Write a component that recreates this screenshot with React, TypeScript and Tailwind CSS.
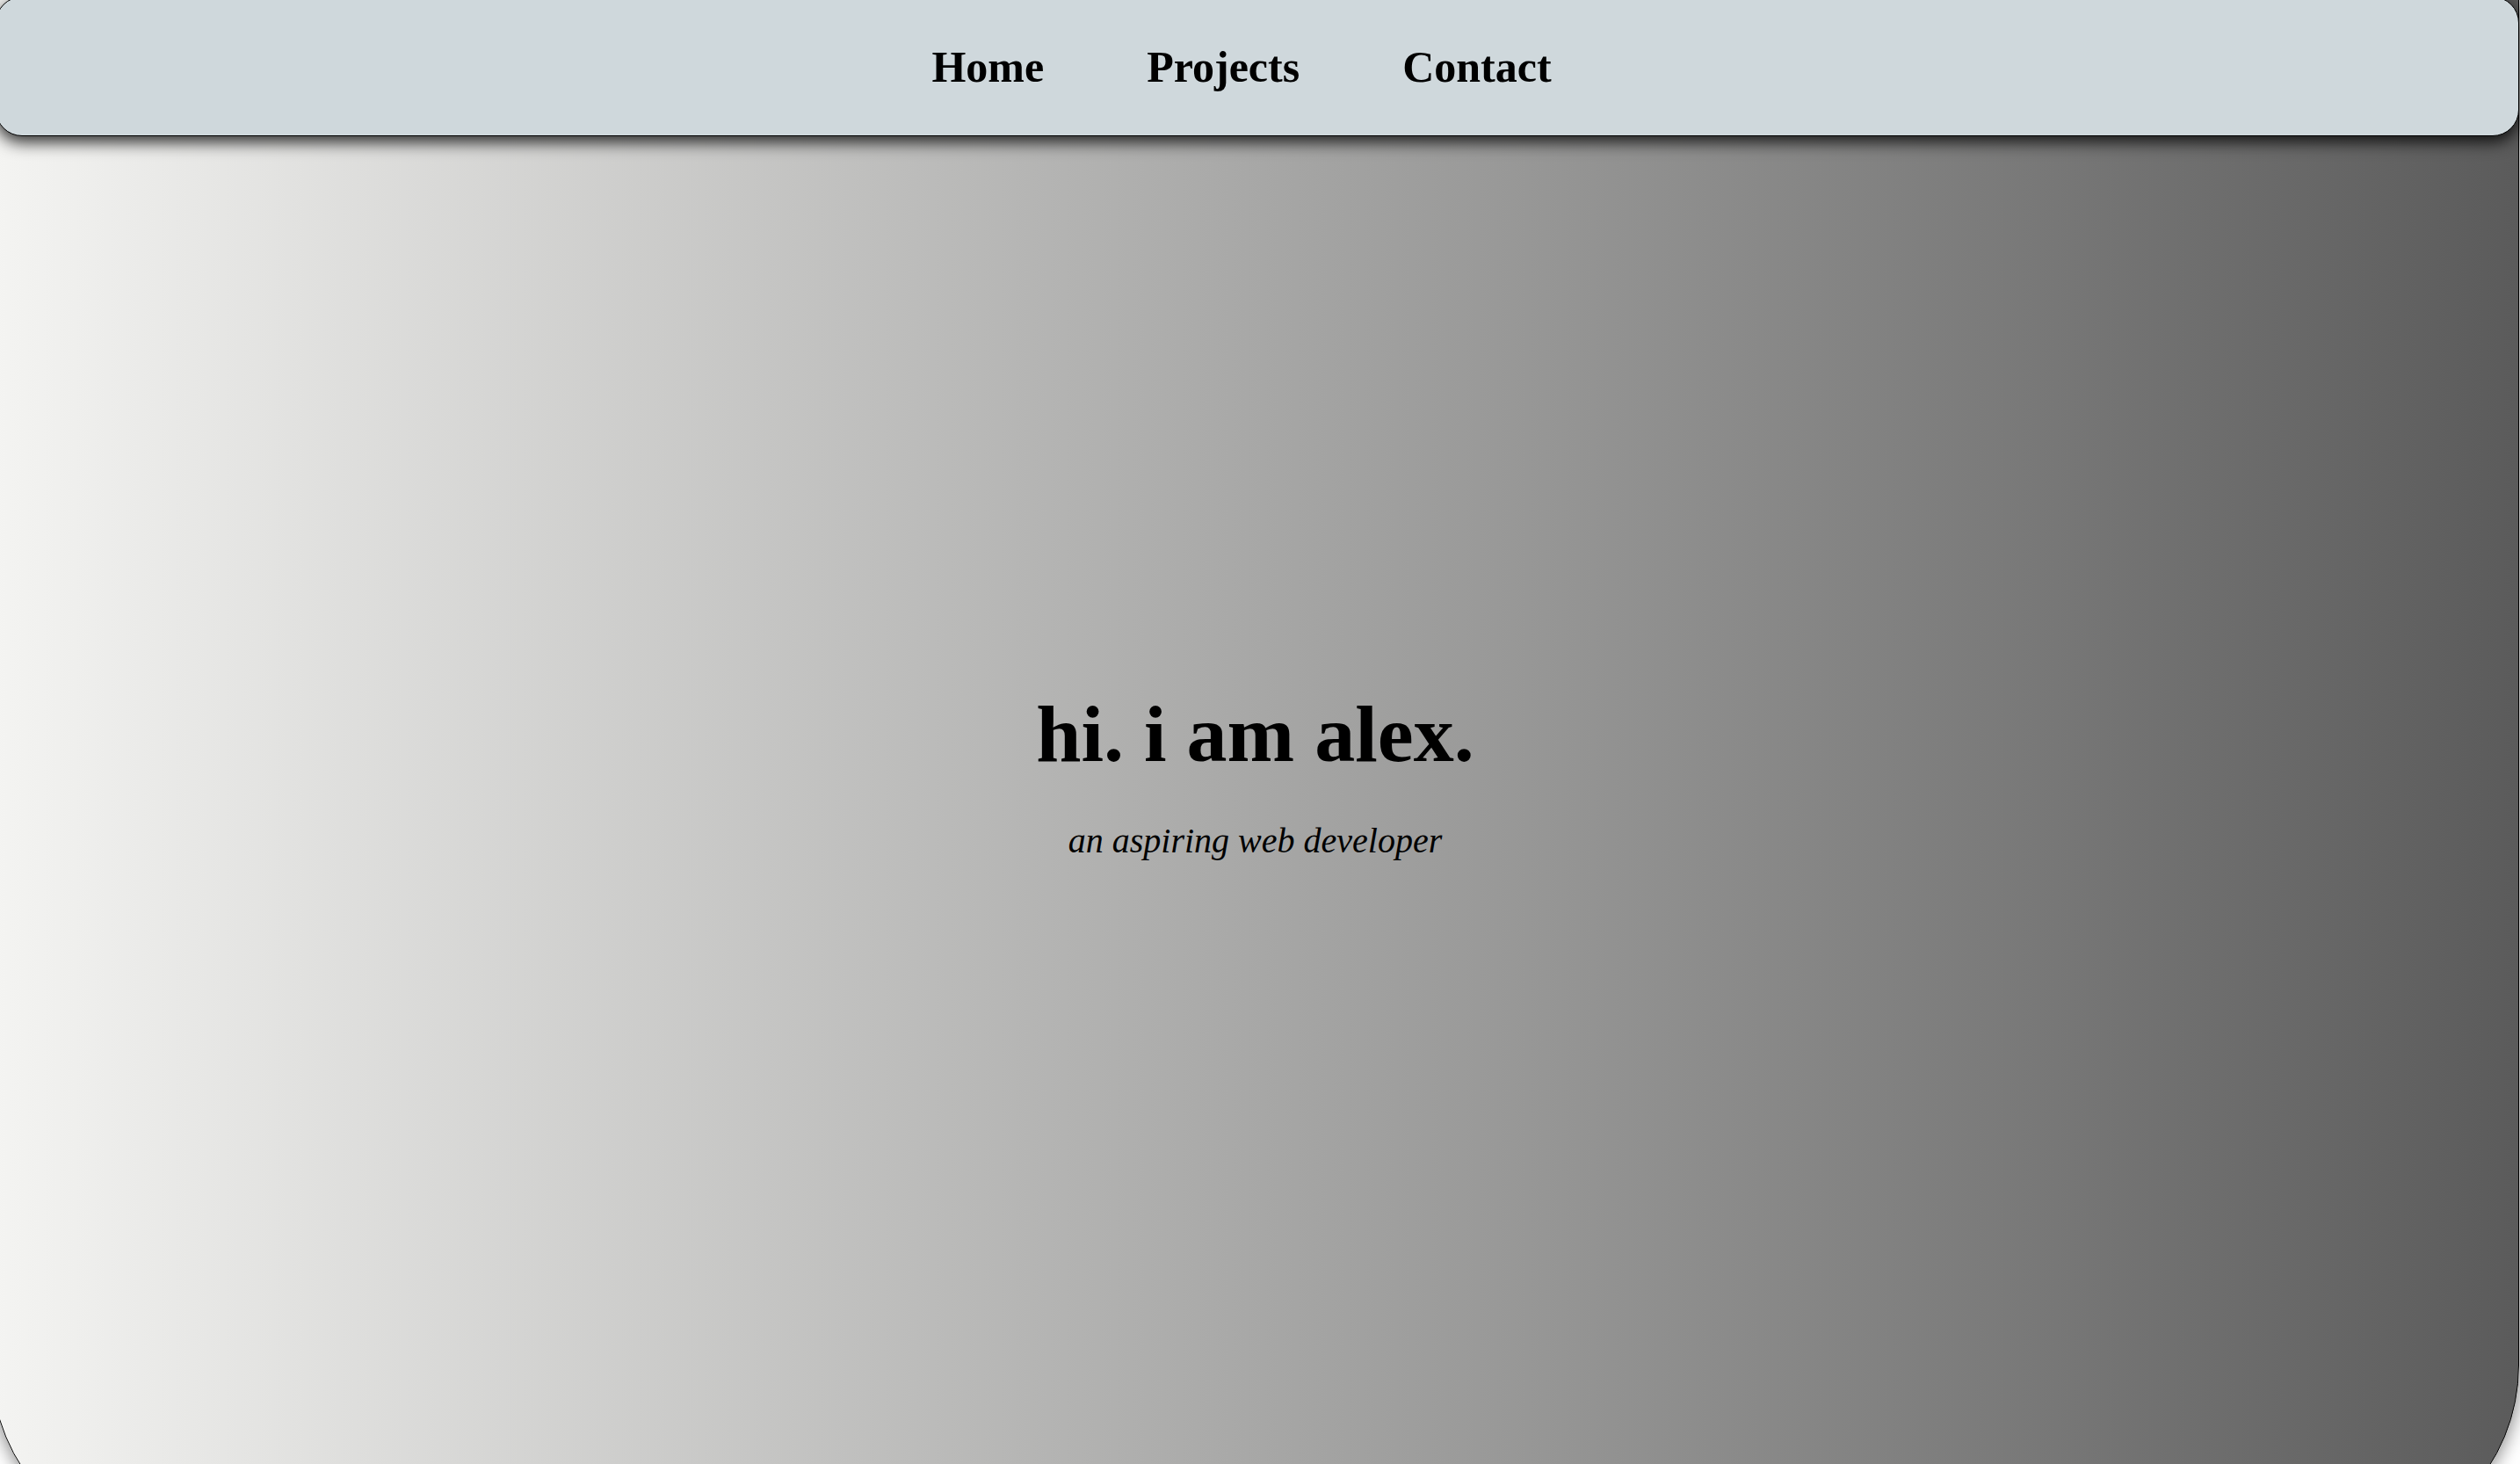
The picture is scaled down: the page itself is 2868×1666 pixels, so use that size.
export default function App() {
  const links = ["Home", "Projects", "Contact"];

  return (
    <div className="h-screen overflow-hidden bg-white font-['Liberation_Serif','Times_New_Roman',serif] text-black">
      <div className="-mt-[4px] -ml-[10px] w-[2877px]">
        <nav className="relative z-10 ml-[5px] flex h-[159px] items-center justify-center gap-[117px] rounded-[30px] border border-black bg-[#cfd8dc] pr-[36px] shadow-[0_7px_18px_rgba(0,0,0,0.8)]">
          {links.map((link) => (
            <a key={link} href="#" className="text-[50px] font-bold leading-[56px]">
              {link}
            </a>
          ))}
        </nav>

        <main className="-mt-[159px] flex h-[1770px] flex-col items-center justify-center rounded-b-[212px] border border-black bg-linear-to-r/srgb from-[#f4f4f2] to-[#5b5b5b] shadow-[0_0_22px_rgba(0,0,0,0.55)]">
          <h1 className="text-[92px] font-bold leading-[102px]">hi. i am alex.</h1>
          <p className="mt-[49px] text-[40px] italic leading-[44px]">an aspiring web developer</p>
        </main>
      </div>
    </div>
  );
}
